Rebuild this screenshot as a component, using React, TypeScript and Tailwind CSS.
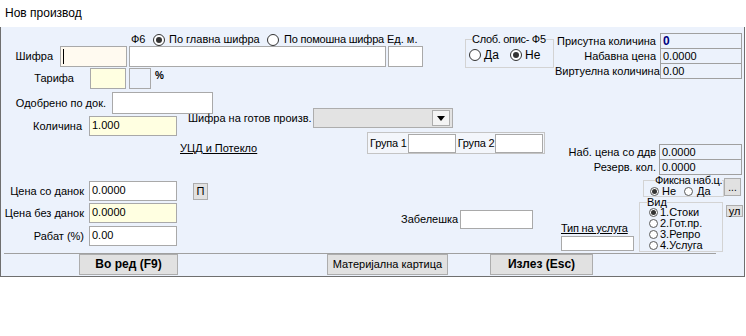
type RadioProps = { checked?: boolean; small?: boolean }

function Radio({ checked, small }: RadioProps) {
  if (small) {
    return (
      <span className="inline-flex h-[9px] w-[9px] shrink-0 items-center justify-center rounded-full border border-[#5a5a5a] bg-white">
        {checked && <span className="h-[5px] w-[5px] rounded-full bg-[#333]" />}
      </span>
    )
  }
  return (
    <span className="inline-flex h-[12px] w-[12px] shrink-0 items-center justify-center rounded-full border border-[#333] bg-white">
      {checked && <span className="h-[6px] w-[6px] rounded-full bg-[#333]" />}
    </span>
  )
}

function InfoRow({ label, value, bold, first }: { label: string; value: string; bold?: boolean; first?: boolean }) {
  return (
    <div className={first ? "flex h-[16px] items-center" : "-mt-px flex h-[16px] items-center"}>
      <span className="w-[101px] text-right">{label}</span>
      <div
        className={
          bold
            ? "ml-[4px] h-[16px] w-[82px] border border-[#a0a0a0] pl-[2px] text-[12px] leading-[14px] font-bold text-[#00007f]"
            : "ml-[4px] h-[16px] w-[82px] border border-[#a0a0a0] pl-[2px] leading-[14px]"
        }
      >
        {value}
      </div>
    </div>
  )
}

function LeftArea() {
  return (
    <div className="flex w-[554px] flex-col">
      {/* top block */}
      <div className="flex h-[61px]">
        <div className="flex w-[425px] flex-col pt-[6px]">
          <div className="flex h-[13px] items-center pl-[130px]">
            <span className="w-[22px]">Ф6</span>
            <Radio checked />
            <span className="ml-[4px] w-[98px]">По главна шифра</span>
            <Radio />
            <span className="ml-[5px] w-[103px] tracking-[-0.2px]">По помошна шифра</span>
            <span>Ед. м.</span>
          </div>
          <div className="flex h-[21px] items-center">
            <span className="w-[52px] text-right">Шифра</span>
            <div className="ml-[7px] h-[21px] w-[67px] border border-[#a9a9a9] bg-[#fffaf0] pl-[2px] pt-[2px]">
              <div className="h-[15px] w-px bg-black" />
            </div>
            <div className="ml-[2px] h-[21px] w-[257px] border border-[#a9a9a9] bg-white" />
            <div className="ml-[2px] h-[21px] w-[35px] border border-[#a9a9a9] bg-white" />
          </div>
          <div className="mt-px flex h-[21px] items-center">
            <span className="w-[73px] text-right">Тарифа</span>
            <div className="ml-[16px] h-[21px] w-[36px] border border-[#a9a9a9] bg-[#ffffe1]" />
            <div className="ml-[3px] h-[21px] w-[22px] border border-[#a9a9a9]" />
            <span className="ml-[4px] self-start pt-[1px] text-[10px] font-bold">%</span>
          </div>
        </div>
        <fieldset className="ml-[39px] mt-[6px] h-[35px] w-[89px] min-w-0 border border-[#d3d3d3] pl-[3px]">
          <legend className="ml-[3px] leading-[13px] tracking-[-0.3px]">Слоб. опис- Ф5</legend>
          <div className="flex h-[18px] items-center">
            <Radio />
            <span className="ml-[3px] w-[26px] text-[12px]">Да</span>
            <Radio checked />
            <span className="ml-[3px] text-[12px]">Не</span>
          </div>
        </fieldset>
      </div>

      {/* одобрено */}
      <div className="mt-[4px] flex h-[22px] items-center">
        <span className="w-[105px] text-right">Одобрено по док.</span>
        <div className="ml-[6px] h-[22px] w-[101px] border border-[#a9a9a9] bg-white" />
      </div>

      {/* количина + шифра на готов произв. */}
      <div className="mt-[2px] flex h-[20px] items-start">
        <span className="w-[81px] text-right leading-[20px]">Количина</span>
        <div className="ml-[7px] h-[20px] w-[88px] border border-[#a9a9a9] bg-[#ffffe1] pl-[2px] leading-[16px]">1.000</div>
        <div className="-mt-[8px] ml-[11px] flex h-[20px] items-center">
          <span className="w-[125px]">Шифра на готов произв.</span>
          <div className="flex h-[20px] w-[140px] items-center justify-end border border-[#adadad] bg-[#e3e3e3] pr-[2px]">
            <div className="flex h-[16px] w-[18px] items-center justify-center border border-[#adadad] bg-[#f4f4f4]">
              <svg width="8" height="5" viewBox="0 0 8 5">
                <path d="M0 0h8L4 5z" fill="#000" />
              </svg>
            </div>
          </div>
        </div>
      </div>

      {/* УЦД + групи */}
      <div className="-mt-[4px] flex h-[22px] items-start">
        <div className="w-[366px] pl-[179px] pt-[10px]">
          <span className="underline">УЦД и Потекло</span>
        </div>
        <div className="flex h-[22px] items-center border border-[#c4c4c4] bg-[#f3f6fb] pl-[2px] pr-px">
          <span className="pr-px tracking-[-0.2px]">Група 1</span>
          <div className="h-[19px] w-[48px] border border-[#a9a9a9] bg-white" />
          <span className="ml-[2px] pr-px tracking-[-0.2px]">Група 2</span>
          <div className="h-[19px] w-[48px] border border-[#a9a9a9] bg-white" />
        </div>
      </div>

      {/* цени */}
      <div className="mt-[27px] flex">
        <div className="flex w-[207px] flex-col">
          <div className="flex h-[20px] items-center">
            <span className="w-[83px] text-right">Цена со данок</span>
            <div className="ml-[5px] h-[20px] w-[88px] border border-[#a9a9a9] bg-white pl-[2px] leading-[16px]">0.0000</div>
            <div className="ml-[16px] flex h-[17px] w-[15px] items-center justify-center border border-[#adadad] bg-[#e1e1e1]">П</div>
          </div>
          <div className="mt-[2px] flex h-[20px] items-center">
            <span className="w-[83px] text-right">Цена без данок</span>
            <div className="ml-[5px] h-[20px] w-[88px] border border-[#a9a9a9] bg-[#ffffe1] pl-[2px] leading-[16px]">0.0000</div>
          </div>
          <div className="mt-[3px] flex h-[20px] items-center">
            <span className="w-[83px] text-right">Рабат (%)</span>
            <div className="ml-[5px] h-[20px] w-[88px] border border-[#a9a9a9] bg-white pl-[2px] leading-[16px]">0.00</div>
          </div>
        </div>
        <div className="ml-[193px] mt-[29px] flex h-[19px] items-center">
          <span className="w-[59px]">Забелешка</span>
          <div className="h-[19px] w-[73px] border border-[#a9a9a9] bg-white" />
        </div>
      </div>
    </div>
  )
}

function RightArea() {
  const vid = ["1.Стоки", "2.Гот.пр.", "3.Репро", "4.Услуга"]
  return (
    <div className="flex flex-1 flex-col pt-[6px]">
      <InfoRow first label="Присутна количина" value="0" bold />
      <InfoRow label="Набавна цена" value="0.0000" />
      <InfoRow label="Виртуелна количина" value="0.00" />

      <div className="mt-[65px] flex h-[16px] items-center">
        <span className="w-[101px] text-right">Наб. цена со ддв</span>
        <div className="ml-[3px] h-[16px] w-[83px] border border-[#a0a0a0] pl-[2px] leading-[14px]">0.0000</div>
      </div>
      <div className="-mt-px flex h-[16px] items-center">
        <span className="w-[101px] text-right">Резерв. кол.</span>
        <div className="ml-[3px] h-[16px] w-[83px] border border-[#a0a0a0] pl-[2px] leading-[14px]">0.0000</div>
      </div>

      <div className="flex items-start">
        <fieldset className="ml-[88px] h-[22px] w-[81px] min-w-0 border border-[#d3d3d3] pl-[6px]">
          <legend className="ml-[5px] leading-[11px] tracking-[-0.3px]">Фиксна наб.ц.</legend>
          <div className="flex h-[10px] items-center">
            <Radio small checked />
            <span className="ml-[3px] w-[22px]">Не</span>
            <Radio small />
            <span className="ml-[4px]">Да</span>
          </div>
        </fieldset>
        <div className="mt-[3px] flex h-[18px] w-[17px] items-center justify-center border border-[#adadad] bg-[#e1e1e1] text-[10px]">
          ...
        </div>
      </div>

      <div className="flex items-start">
        <div className="ml-[6px] flex w-[73px] flex-col pt-[25px]">
          <span className="underline tracking-[-0.2px]">Тип на услуга</span>
          <div className="mt-px h-[15px] w-[73px] border border-[#a9a9a9] bg-white" />
        </div>
        <fieldset className="ml-[5px] h-[55px] w-[84px] min-w-0 border border-[#d3d3d3] pl-[9px]">
          <legend className="-ml-[2px] leading-[10px]">Вид</legend>
          <div className="flex flex-col">
            {vid.map((v, i) => (
              <div key={v} className="flex h-[11px] items-center">
                <Radio small checked={i === 0} />
                <span className="ml-[2px] leading-[11px]">{v}</span>
              </div>
            ))}
          </div>
        </fieldset>
        <div className="ml-[3px] mt-[8px] flex h-[12px] w-[17px] items-center justify-center border border-[#adadad] bg-[#e1e1e1] leading-[10px]">
          ул
        </div>
      </div>
    </div>
  )
}

export default function App() {
  return (
    <div className="h-[336px] w-[746px] whitespace-nowrap bg-white font-['Liberation_Sans',Arial,sans-serif] text-[11px] leading-[13px] text-black">
      <div className="flex h-[27px] items-center pl-[5px] text-[12px]">Нов производ</div>
      <div className="flex h-[250px] w-[745px] flex-col border-x border-b border-[#6f6f6f] bg-[#ecf2fc]">
        <div className="flex h-[226px]">
          <LeftArea />
          <RightArea />
        </div>
        <div className="ml-[3px] h-px w-[712px] bg-[#a0a0a0]" />
        <div className="flex h-[21px]">
          <button className="ml-[78px] h-[21px] w-[99px] border border-[#adadad] bg-[#e1e1e1] text-[12px] font-bold">
            Во ред (F9)
          </button>
          <button className="ml-[149px] h-[21px] w-[121px] border border-[#adadad] bg-[#e1e1e1]">
            Материјална картица
          </button>
          <button className="ml-[42px] h-[21px] w-[103px] border border-[#adadad] bg-[#e1e1e1] text-[12px] font-bold">
            Излез (Esc)
          </button>
        </div>
      </div>
    </div>
  )
}
